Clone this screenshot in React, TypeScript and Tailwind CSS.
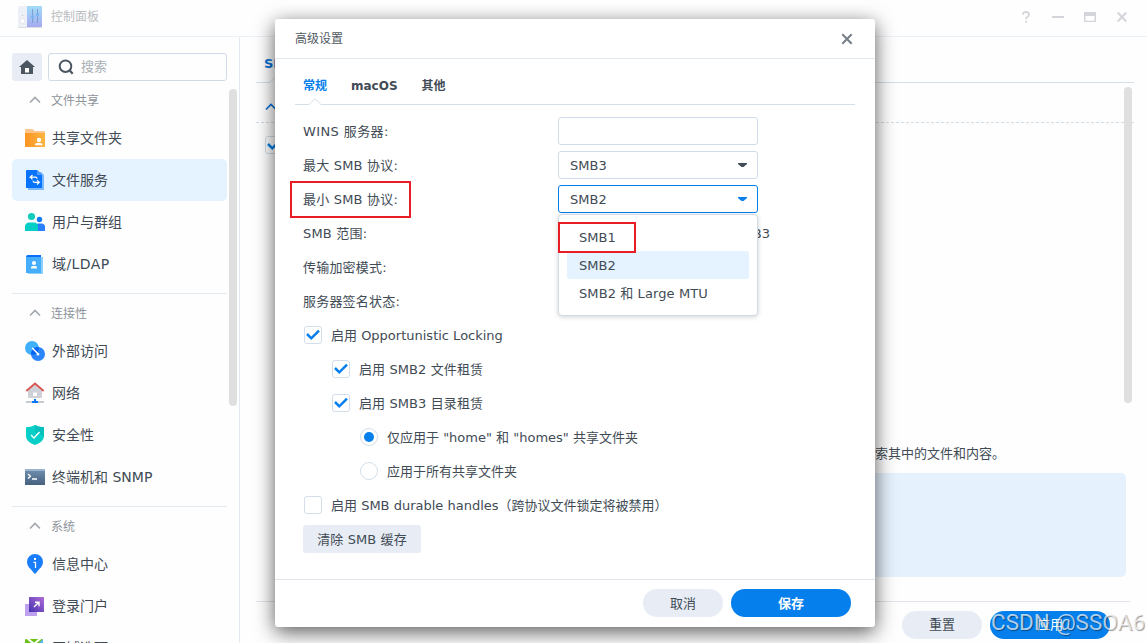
import type { ReactNode } from 'react';

type NavItem = {
  label: string;
  icon: ReactNode;
  active?: boolean;
  wide?: boolean;
};

type NavGroup = {
  title: string;
  items: NavItem[];
};

const FolderIcon = () => (
  <svg width="20" height="20" viewBox="0 0 20 20">
    <defs>
      <linearGradient id="folder" x1="0" x2="1">
        <stop offset="0" stopColor="#fb9423" />
        <stop offset="1" stopColor="#fdb540" />
      </linearGradient>
    </defs>
    <path d="M0 7V2a1 1 0 0 1 1-1h6.500l2 2H19a1 1 0 0 1 1 1v3z" fill="#fcc58c" />
    <path d="M0 5h20v13.500a.5.5 0 0 1-.5.500H.5a.5.5 0 0 1-.5-.5z" fill="url(#folder)" />
    <circle cx="14" cy="12" r="2.200" fill="#fff" />
    <path d="M10 17.200v-.7q0-1.500 2-1.500h3.500q2 0 2 1.500v.7z" fill="#fff" />
  </svg>
);

const FileServiceIcon = () => (
  <svg width="20" height="20" viewBox="0 0 20 20">
    <path d="M3 2h13l3 3v15H3z" fill="#7cb8fc" />
    <path d="M1 1a1 1 0 0 1 1-1h10l5 4.500V18H1z" fill="#0773fb" />
    <path d="M12 0l5 4.500V5h-5z" fill="#4f9dfd" />
    <path d="M7.500 5L5.300 7.200h5.200q1.500 0 1.500 1.500M5.300 7.200l2.200 2.200M12 14.500l2.200-2.200H9.500Q8 12.300 8 10.800M14.200 12.300L12 10.100" fill="none" stroke="#fff" strokeWidth="1.200" />
  </svg>
);

const UsersIcon = () => (
  <svg width="20" height="20" viewBox="0 0 20 20">
    <circle cx="14.500" cy="7.500" r="2.700" fill="#0e7bfb" />
    <path d="M10 19v-4q0-3.500 3.500-3.500h3q3.500 0 3.500 3.500v4z" fill="#2a80fc" />
    <circle cx="6.500" cy="4.500" r="3.600" fill="#13cbbb" />
    <path d="M0 19v-4q0-4.500 4.500-4.500H9q4 0 4 4.500v4z" fill="#04cec5" />
  </svg>
);

const LdapIcon = () => (
  <svg width="20" height="20" viewBox="0 0 20 20">
    <path d="M3 3h15v17H3z" fill="#8bd0fd" />
    <path d="M1 3a2 2 0 0 1 2-2h13v3H1z" fill="#0b6ffa" />
    <path d="M1 3h15v16H1z" fill="#46adfc" />
    <circle cx="9" cy="9" r="2" fill="#fff" />
    <path d="M6 14.500v-1q0-1.500 1.500-1.500h3q1.500 0 1.500 1.500v1z" fill="#fff" />
  </svg>
);

const ExternalIcon = () => (
  <svg width="20" height="20" viewBox="0 0 20 20">
    <circle cx="7" cy="7" r="7" fill="#40b0fb" />
    <circle cx="13" cy="13" r="7" fill="#2b85fd" />
    <path d="M6.100 13.900A7 7 0 0 1 13.900 6.100A7 7 0 0 1 6.100 13.900z" fill="#0563f5" />
    <path d="M7.200 7l6 6" stroke="#fff" strokeWidth="1.500" />
    <circle cx="13" cy="13.200" r="1.300" fill="#fff" />
  </svg>
);

const NetworkIcon = () => (
  <svg width="20" height="22" viewBox="0 0 20 22">
    <path d="M3 8l7-6 7 6v7a1 1 0 0 1-1 1H4a1 1 0 0 1-1-1z" fill="#ced2d8" />
    <path d="M1.300 9L10 1.500 18.700 9" fill="none" stroke="#dc5651" strokeWidth="1.900" />
    <path d="M8 14v-3.500h4V14z" fill="#fff" />
    <path d="M1 19h18v2H1z" fill="#c6cad1" />
    <path d="M9 17h2v2h2v2H7v-2h2z" fill="#0b76fc" />
  </svg>
);

const SecurityIcon = () => (
  <svg width="20" height="20" viewBox="0 0 20 20">
    <path d="M10 0c3 1.500 6 2.200 9 2.200V11c0 4-4 7.500-9 9-5-1.500-9-5-9-9V2.200c3 0 6-.7 9-2.200z" fill="#07cfc8" />
    <path d="M10 0c3 1.500 6 2.200 9 2.200V11L10 7z" fill="#06c0bd" />
    <path d="M6 10l3 3 5.500-6" fill="none" stroke="#fff" strokeWidth="1.400" />
  </svg>
);

const TerminalIcon = () => (
  <svg width="20" height="16" viewBox="0 0 20 16">
    <defs>
      <linearGradient id="term" x1="0" x2="0" y1="0" y2="1">
        <stop offset="0" stopColor="#7390b0" />
        <stop offset="1" stopColor="#45617f" />
      </linearGradient>
    </defs>
    <rect width="20" height="16" rx=".5" fill="url(#term)" />
    <path d="M0 0h20v2H0z" fill="#97b3d0" />
    <path d="M3 5l2.500 2.300L3 9.600M7 10h5" fill="none" stroke="#fff" strokeWidth="1.300" />
  </svg>
);

const InfoIcon = () => (
  <svg width="20" height="20" viewBox="0 0 20 20">
    <path d="M10 0a8 8 0 0 1 8 8c0 4.500-4 7-6.500 10.500L10 20l-1.500-1.500C6 15 2 12.500 2 8a8 8 0 0 1 8-8z" fill="#1a7efc" />
    <path d="M9 4h2v2H9z" fill="#fff" />
    <path d="M8.500 8.300h2V14" fill="none" stroke="#fff" strokeWidth="1.200" />
  </svg>
);

const PortalIcon = () => (
  <svg width="20" height="20" viewBox="0 0 20 20">
    <defs>
      <linearGradient id="portal" x1="0" x2="1" y1="1" y2="0">
        <stop offset="0" stopColor="#4432b0" />
        <stop offset="1" stopColor="#b06bd6" />
      </linearGradient>
    </defs>
    <path d="M0 8h12v12H0z" fill="#bda1ef" />
    <path d="M4 1h15v15H4z" fill="url(#portal)" />
    <path d="M9 11l5-5M10 6.200h4v4" fill="none" stroke="#fff" strokeWidth="1.400" />
  </svg>
);

const RegionIcon = () => (
  <svg width="20" height="20" viewBox="0 0 20 20">
    <rect x="0" y="1" width="18" height="18" rx="1" fill="#6cc21b" />
    <path d="M18 1v18H8l4-12z" fill="#58b7f5" />
    <path d="M2 0l7 6 7-6" fill="none" stroke="#fff" strokeWidth="2" />
  </svg>
);

const groups: NavGroup[] = [
  {
    title: '文件共享',
    items: [
      { label: '共享文件夹', icon: <FolderIcon /> },
      { label: '文件服务', icon: <FileServiceIcon />, active: true },
      { label: '用户与群组', icon: <UsersIcon /> },
      { label: '域/LDAP', icon: <LdapIcon />, wide: true },
    ],
  },
  {
    title: '连接性',
    items: [
      { label: '外部访问', icon: <ExternalIcon /> },
      { label: '网络', icon: <NetworkIcon /> },
      { label: '安全性', icon: <SecurityIcon /> },
      { label: '终端机和 SNMP', icon: <TerminalIcon /> },
    ],
  },
  {
    title: '系统',
    items: [
      { label: '信息中心', icon: <InfoIcon /> },
      { label: '登录门户', icon: <PortalIcon /> },
      { label: '区域选项', icon: <RegionIcon /> },
    ],
  },
];

const Chevron = ({ className }: { className: string }) => (
  <svg width="12" height="8" viewBox="0 0 12 8" className={className}>
    <path d="M1 6.500l5-5 5 5" fill="none" stroke="currentColor" strokeWidth="1.600" />
  </svg>
);

// Divider with the small upward notch under the selected tab
const TabLine = ({ className }: { className: string }) => (
  <div className={`flex h-[7px] items-end ${className}`}>
    <div className="h-px w-3.5 bg-[#d5dfe8]" />
    <svg width="12" height="7" viewBox="0 0 12 7">
      <path d="M0 6.500L6 .8l6 5.700" fill="none" stroke="#d5dfe8" />
    </svg>
    <div className="h-px flex-1 bg-[#d5dfe8]" />
  </div>
);

const Checkbox = ({ checked }: { checked?: boolean }) => (
  <span className="flex size-[18px] items-center justify-center rounded-[3px] border border-[#d3deea] bg-white">
    {checked && (
      <svg width="16" height="16" viewBox="0 0 16 16">
        <path d="M2 7l4.300 4.300L14 3.700" fill="none" stroke="#057feb" strokeWidth="2.500" />
      </svg>
    )}
  </span>
);

const Radio = ({ checked }: { checked?: boolean }) => (
  <span className="flex size-[18px] items-center justify-center rounded-full border border-[#d3deea] bg-white">
    {checked && <span className="size-2.5 rounded-full bg-[#057feb]" />}
  </span>
);

const Caret = () => (
  <svg width="9" height="4" viewBox="0 0 9 4">
    <path d="M0 0h9v1L5.500 4h-2L0 1z" fill="currentColor" />
  </svg>
);

function FieldRow({ label, children }: { label: ReactNode; children?: ReactNode }) {
  return (
    <div className="flex h-[34px] items-center">
      <div className="w-[255px] pt-0.5 tracking-[0.2px]">{label}</div>
      {children}
    </div>
  );
}

function OptionRow({ control, className, children }: { control: ReactNode; className: string; children: ReactNode }) {
  return (
    <label className={`flex h-[34px] items-center gap-[9px] ${className}`}>
      {control}
      <span className="pt-0.5">{children}</span>
    </label>
  );
}

function Sidebar() {
  return (
    <aside className="relative flex w-60 shrink-0 flex-col border-r border-[#e3e9f0] pl-3 pr-3">
      <div className="mt-4 flex h-7 shrink-0 gap-1.5">
        <div className="flex w-[30px] items-center justify-center rounded-[3px] bg-[#e8edf5]">
          <svg width="16" height="14" viewBox="0 0 16 14">
            <path d="M8 0l8 7h-2v7H2V7H0z" fill="#4b5661" />
            <path d="M6 8h4v4.500H6z" fill="#fff" />
          </svg>
        </div>
        <div className="flex w-[179px] items-center rounded-[3px] border border-[#cfdce8] pl-[9px] text-[#a9b0b6]">
          <svg width="16" height="16" viewBox="0 0 16 16" className="mr-[7px]">
            <circle cx="7.500" cy="7.200" r="5.800" fill="none" stroke="#4b5661" strokeWidth="2" />
            <path d="M11.500 11.300l3.200 3.400" stroke="#4b5661" strokeWidth="2.200" />
          </svg>
          搜索
        </div>
      </div>
      <nav className="mt-0.5">
        {groups.map((group, i) => (
          <div key={group.title}>
            {i > 0 && <div className="mb-0.5 mt-2 h-px w-[215px] bg-[#e3e9f0]" />}
            <div className="flex h-[34px] items-center pl-[17px] text-xs text-[#8d949b]">
              <Chevron className="mr-[10px] text-[#a0a6ad]" />
              <span className="pt-0.5">{group.title}</span>
            </div>
            {group.items.map((item) => (
              <div
                key={item.label}
                className={`flex h-[42px] w-[215px] items-center rounded-[5px] pl-[13px] text-sm text-[#3f4a55] ${item.active ? 'bg-[#e5f2ff]' : ''}`}
              >
                <span className="mr-[7px]">{item.icon}</span>
                <span className={item.wide ? 'tracking-[0.4px]' : ''}>{item.label}</span>
              </div>
            ))}
          </div>
        ))}
      </nav>
      <div className="absolute left-[229px] top-[52px] h-[317px] w-2 rounded-full bg-[#dfdfdf]" />
    </aside>
  );
}

function MainPanel() {
  return (
    <main className="relative flex flex-1 flex-col pl-4">
      <div className="mt-[17px] h-[22px] pl-2 pt-px text-[13px] font-bold leading-[18px] text-[#0672d8]">SMB</div>
      <TabLine className="mr-[13px]" />
      <div className="mr-[13px] flex h-10 items-center border-b border-dashed border-[#d0dce6] pl-[9px] pt-2">
        <Chevron className="text-[#0672d8]" />
      </div>
      <div className="ml-[9px] mt-[13px]">
        <Checkbox checked />
      </div>
      <p className="mt-[288px] h-[22px] pl-[619px] pt-px leading-[22px]">索其中的文件和内容。</p>
      <div className="ml-10 mr-[21px] mt-[9px] h-[104px] rounded-[5px] bg-[#e5f1fd]" />
      <div className="mr-[17px] mt-6 flex justify-end gap-2 border-t border-[#dfe4ea] pr-5 pt-[9px]">
        <button className="h-7 w-20 rounded-full bg-[#e8edf5]">重置</button>
        <button className="h-7 w-[120px] rounded-full bg-[#057feb] text-white">应用</button>
      </div>
      <div className="absolute right-[15px] top-[50px] h-[316px] w-2 rounded-full bg-[#dfdfdf]" />
    </main>
  );
}

function ProtocolMenu() {
  return (
    <div className="absolute left-0 top-[29px] z-10 h-[102px] w-[200px] rounded-[4px] border border-[#d0dbe5] bg-white px-2 pt-2 shadow-[0_1px_5px_rgba(0,0,0,0.18)]">
      <div className="flex h-7 items-center pl-3 pt-0.5">SMB1</div>
      <div className="flex h-7 items-center rounded-[3px] bg-[#e5f2ff] pl-3 pt-0.5">SMB2</div>
      <div className="flex h-7 items-center pl-3 pt-0.5 tracking-[0.1px]">SMB2 和 Large MTU</div>
      <div className="absolute -left-px top-[7px] h-[31px] w-[78px] border-2 border-[#e91d25]" />
    </div>
  );
}

function AdvancedDialog() {
  return (
    <div className="absolute left-[275px] top-[19px] flex h-[608px] w-[600px] flex-col rounded-[3px] bg-white shadow-[0_5px_20px_rgba(0,0,0,0.65)]">
      <div className="flex h-10 shrink-0 items-center justify-between border-b border-[#dfe7ef] pl-5 pr-[22px] pt-px text-xs text-[#505a64]">
        高级设置
        <svg width="12" height="12" viewBox="0 0 12 12">
          <path d="M1.300 1.300l9.400 9.400M10.700 1.300l-9.400 9.400" stroke="#757d86" strokeWidth="2" />
        </svg>
      </div>
      <div className="flex h-[39px] shrink-0 items-end gap-6 pl-7 text-xs font-bold leading-6">
        <span className="text-[#057feb]">常规</span>
        <span>macOS</span>
        <span>其他</span>
      </div>
      <TabLine className="mx-5 shrink-0" />
      <div className="mt-[9px] flex-1 pl-7">
        <FieldRow label={<span className="tracking-[0.4px]">WINS 服务器:</span>}>
          <div className="h-7 w-[200px] rounded-[3px] border border-[#d0dce8]" />
        </FieldRow>
        <FieldRow label="最大 SMB 协议:">
          <div className="flex h-7 w-[200px] items-center justify-between rounded-[3px] border border-[#d0dce8] pl-[11px] pr-[10px]">
            <span className="pt-0.5">SMB3</span>
            <Caret />
          </div>
        </FieldRow>
        <FieldRow
          label={
            <span className="relative">
              最小 SMB 协议:
              <span className="absolute -left-[13px] -top-[11px] h-[37px] w-[121px] border-2 border-[#e91d25]" />
            </span>
          }
        >
          <div className="relative">
            <div className="flex h-7 w-[200px] items-center justify-between rounded-[3px] border border-[#057feb] pl-[11px] pr-[10px]">
              <span className="pt-0.5">SMB2</span>
              <span className="text-[#057feb]">
                <Caret />
              </span>
            </div>
            <ProtocolMenu />
          </div>
        </FieldRow>
        <FieldRow label="SMB 范围:">
          <div className="w-[212px] pt-0.5 text-right">SMB2 - SMB3</div>
        </FieldRow>
        <FieldRow label="传输加密模式:" />
        <FieldRow label="服务器签名状态:" />
        <OptionRow control={<Checkbox checked />} className="pl-px">
          启用 Opportunistic Locking
        </OptionRow>
        <OptionRow control={<Checkbox checked />} className="pl-[29px] tracking-[0.1px]">
          启用 SMB2 文件租赁
        </OptionRow>
        <OptionRow control={<Checkbox checked />} className="pl-[29px] tracking-[0.1px]">
          启用 SMB3 目录租赁
        </OptionRow>
        <OptionRow control={<Radio checked />} className="pl-[57px]">
          仅应用于 "home" 和 "homes" 共享文件夹
        </OptionRow>
        <OptionRow control={<Radio />} className="pl-[57px]">
          应用于所有共享文件夹
        </OptionRow>
        <OptionRow control={<Checkbox />} className="pl-px">
          启用 SMB durable handles（跨协议文件锁定将被禁用）
        </OptionRow>
        <div className="flex h-[34px] items-center">
          <button className="h-7 w-[118px] rounded-[3px] bg-[#e8edf5] pt-0.5 tracking-[0.1px]">清除 SMB 缓存</button>
        </div>
      </div>
      <div className="flex h-12 shrink-0 justify-end gap-2 border-t border-[#e0e5eb] pr-6 pt-[9px]">
        <button className="h-7 w-20 rounded-full bg-[#e8edf5] pt-px">取消</button>
        <button className="h-7 w-[120px] rounded-full bg-[#057feb] pt-px font-bold text-white">保存</button>
      </div>
    </div>
  );
}

export default function App() {
  return (
    <div className="relative flex h-[643px] w-[1147px] flex-col overflow-hidden whitespace-nowrap bg-[#fefefe] font-['DejaVu_Sans','Noto_Sans_CJK_SC',sans-serif] text-[13px] text-[#414b55]">
      <header className="flex h-[37px] shrink-0 items-center border-b border-[#eaf1f7] pb-0.5 pl-[18px] pr-5 text-xs text-[#b9bcc0]">
        <svg width="24" height="22" viewBox="0 0 24 22" className="mr-[9px]">
          <defs>
            <linearGradient id="panel" x1="0" x2="0" y1="0" y2="1">
              <stop offset="0" stopColor="#a0dcf8" />
              <stop offset="1" stopColor="#a5aaf0" />
            </linearGradient>
          </defs>
          <rect y="1" width="24" height="21" rx="1" fill="#dddde2" />
          <rect width="24" height="21" rx="1" fill="#eef0f8" />
          <path d="M9 0h14a1 1 0 0 1 1 1v19a1 1 0 0 1-1 1H9z" fill="url(#panel)" />
          <path d="M14.500 3v14M19.500 3v14" stroke="#7e9fce" />
          <circle cx="14.500" cy="10.500" r="1.600" fill="#75b5ee" />
          <circle cx="19.500" cy="8.500" r="1.600" fill="#75b5ee" />
          <circle cx="4.500" cy="9.500" r=".6" fill="#b5b9c5" />
          <circle cx="4.500" cy="15" r="2.500" fill="#fff" stroke="#d8dbe4" strokeWidth=".7" />
        </svg>
        控制面板
        <div className="ml-auto flex items-center text-[#d3d5da]">
          <svg width="8" height="12" viewBox="0 0 8 12" className="mr-[22px]">
            <path d="M1 3.700Q1 1 4 1t3 2.600Q7 5 5.500 5.800 4 6.700 4 8.300M4 9.800v2" fill="none" stroke="currentColor" strokeWidth="1.800" />
          </svg>
          <div className="mr-5 h-0.5 w-3 bg-current" />
          <svg width="12" height="10" viewBox="0 0 12 10" className="mr-[21px]">
            <path d="M0 0h12v10H0zM1.500 4v4.700h9V4z" fill="currentColor" fillRule="evenodd" />
          </svg>
          <svg width="10" height="10" viewBox="0 0 10 10">
            <path d="M.7.5l8.600 9M9.300.5l-8.600 9" stroke="currentColor" strokeWidth="2" />
          </svg>
        </div>
      </header>
      <div className="flex min-h-0 flex-1">
        <Sidebar />
        <MainPanel />
      </div>
      <AdvancedDialog />
      <div className="absolute left-[991px] top-[608px] font-['Roboto',sans-serif] text-[22.5px] leading-7 text-white/70 [text-shadow:1px_1px_1px_rgba(0,0,0,0.4)]">
        CSDN @SSOA6
      </div>
    </div>
  );
}
